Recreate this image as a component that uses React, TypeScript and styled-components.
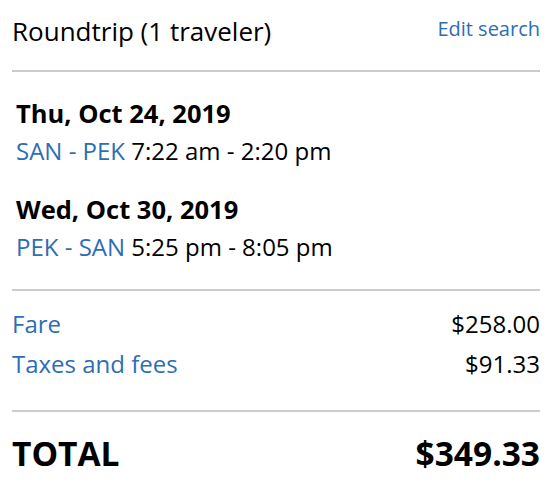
import { FunctionComponent } from "react";
import styled, { createGlobalStyle } from "styled-components";

const GlobalStyle = createGlobalStyle`
  body {
    margin: 0;
    background: #fff;
    font-family: "Open Sans", "Liberation Sans", sans-serif;
    color: #000;
  }
`;

const Summary = styled.div`
  width: 552px;
  padding: 0 12px;
  box-sizing: border-box;
`;
const Header = styled.div`
  display: flex;
  justify-content: space-between;
  align-items: flex-start;
  padding-top: 13.5px;
  height: 70px;
  box-sizing: border-box;
`;
const Title = styled.div`
  font-size: 26px;
  line-height: 35px;
`;
const EditLink = styled.a`
  margin-top: 1px;
  font-size: 20px;
  line-height: 27px;
  color: #2d6db5;
  text-decoration: none;
`;
const Divider = styled.div`
  height: 2px;
  background: #cccccc;
`;
const Trips = styled.div`
  display: flex;
  flex-direction: column;
  gap: 25.5px;
  padding: 23.5px 0 26px 4px;
`;
const Trip = styled.div`
  display: flex;
  flex-direction: column;
  gap: 3px;
`;
const TripDate = styled.div`
  font-size: 25.5px;
  line-height: 35px;
  font-weight: 700;
`;
const TripTimes = styled.div`
  font-size: 24px;
  line-height: 33px;
`;
const Route = styled.span`
  color: #2d6db5;
`;
const Charges = styled.div`
  display: flex;
  flex-direction: column;
  gap: 7px;
  padding: 16px 0 30px;
`;
const Row = styled.div`
  display: flex;
  justify-content: space-between;
  align-items: baseline;
  font-size: 24px;
  line-height: 33px;
`;
const ChargeLabel = styled.span`
  color: #2d6db5;
`;
const TotalRow = styled(Row)`
  font-size: 33.5px;
  line-height: 46px;
  font-weight: 700;
  padding-top: 18px;
`;

const trips = [
  { date: "Thu, Oct 24, 2019", route: "SAN - PEK", times: "7:22 am - 2:20 pm" },
  { date: "Wed, Oct 30, 2019", route: "PEK - SAN", times: "5:25 pm - 8:05 pm" },
];

const charges = [
  { label: "Fare", amount: "$258.00" },
  { label: "Taxes and fees", amount: "$91.33" },
];

const App: FunctionComponent = () => {
  return (
    <Summary>
      <GlobalStyle />
      <Header>
        <Title>Roundtrip (1 traveler)</Title>
        <EditLink href="#">Edit search</EditLink>
      </Header>
      <Divider />
      <Trips>
        {trips.map((t) => (
          <Trip key={t.date}>
            <TripDate>{t.date}</TripDate>
            <TripTimes>
              <Route>{t.route}</Route> {t.times}
            </TripTimes>
          </Trip>
        ))}
      </Trips>
      <Divider />
      <Charges>
        {charges.map((c) => (
          <Row key={c.label}>
            <ChargeLabel>{c.label}</ChargeLabel>
            <span>{c.amount}</span>
          </Row>
        ))}
      </Charges>
      <Divider />
      <TotalRow>
        <span>TOTAL</span>
        <span>$349.33</span>
      </TotalRow>
    </Summary>
  );
};

export default App;
